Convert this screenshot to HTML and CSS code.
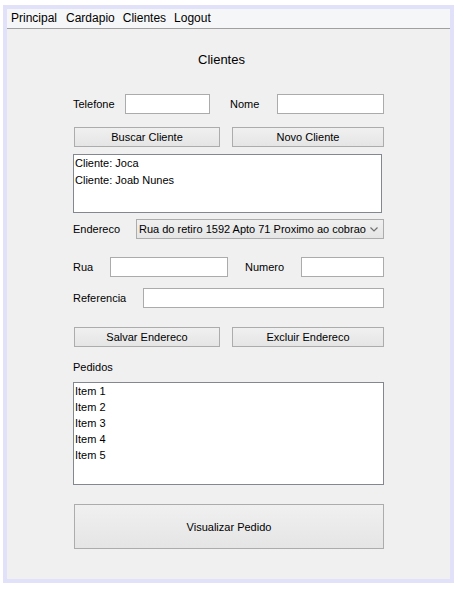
FILE: index.html
```html
<!DOCTYPE html>
<html>
<head>
<meta charset="utf-8">
<link rel="stylesheet" href="styles.css">
</head>
<body>
<div class="frame">
  <div class="window">
    <div class="menubar">
      <span class="menu-item menu-first">Principal</span>
      <span class="menu-item">Cardapio</span>
      <span class="menu-item">Clientes</span>
      <span class="menu-item">Logout</span>
    </div>
    <div class="content">
      <div class="title">Clientes</div>
      <div class="form">
        <div class="row row-search">
          <label class="lbl lbl-tel">Telefone</label>
          <div class="input in-tel"></div>
          <label class="lbl lbl-nome">Nome</label>
          <div class="input in-nome"></div>
        </div>
        <div class="row row-btns1">
          <button class="btn btn-left">Buscar Cliente</button>
          <button class="btn btn-right">Novo Cliente</button>
        </div>
        <div class="list list-clientes">
          <div class="item">Cliente: Joca</div>
          <div class="item">Cliente: Joab Nunes</div>
        </div>
        <div class="row row-end">
          <label class="lbl lbl-end">Endereco</label>
          <div class="combo">
            <span class="combo-text">Rua do retiro 1592 Apto 71 Proximo ao cobrao</span>
            <svg class="chev" width="8" height="5" viewBox="0 0 8 5"><path d="M0.5 0.5 L4 4 L7.5 0.5" fill="none" stroke="#707070" stroke-width="1.2"/></svg>
          </div>
        </div>
        <div class="row row-rua">
          <label class="lbl lbl-rua">Rua</label>
          <div class="input in-rua"></div>
          <label class="lbl lbl-num">Numero</label>
          <div class="input in-num"></div>
        </div>
        <div class="row row-ref">
          <label class="lbl lbl-ref">Referencia</label>
          <div class="input in-ref"></div>
        </div>
        <div class="row row-btns2">
          <button class="btn btn-left">Salvar Endereco</button>
          <button class="btn btn-right">Excluir Endereco</button>
        </div>
        <div class="lbl pedidos-lbl">Pedidos</div>
        <div class="list list-pedidos">
          <div class="item">Item 1</div>
          <div class="item">Item 2</div>
          <div class="item">Item 3</div>
          <div class="item">Item 4</div>
          <div class="item">Item 5</div>
        </div>
        <button class="btn btn-big">Visualizar Pedido</button>
      </div>
    </div>
  </div>
</div>
</body>
</html>
```
FILE: styles.css
```css
* { box-sizing: border-box; }
html, body { margin: 0; padding: 0; background: #ffffff; }
body { font-family: "Liberation Sans", Arial, sans-serif; font-size: 11px; color: #000; }

.frame {
  margin: 5px 0 0 3px;
  width: 451px;
  border: 4px solid #e1e1f9;
}
.window { width: 443px; height: 570px; display: flex; flex-direction: column; }

.menubar {
  height: 20px;
  background: #f5f6f7;
  border-bottom: 1px solid #a0a0a0;
  display: flex;
  align-items: center;
  padding-left: 4px;
  font-size: 12px;
  color: #000;
}
.menu-item { padding: 0 4px 1px 0; margin-right: 4px; }
.menu-first { margin-right: 5px; }

.content { flex: 1; background: #f0f0f0; }

.title {
  font-size: 13px;
  line-height: 16px;
  margin-top: 23px;
  padding-left: 191px;
}

.form { width: 311px; margin: 26px 0 0 66px; display: flex; flex-direction: column; }

.row { display: flex; align-items: center; }
.lbl { display: block; }

.input { height: 20px; background: #fff; border: 1px solid #ababab; }

.row-search { height: 20px; }
.lbl-tel { width: 52px; }
.in-tel { width: 85px; }
.lbl-nome { width: 47px; margin-left: 20px; }
.in-nome { flex: 1; }

.btn {
  font-family: inherit;
  font-size: 11px;
  color: #000;
  height: 20px;
  padding: 0;
  border: 1px solid #acacac;
  background: linear-gradient(#f0f0f0, #e5e5e5);
  border-radius: 0;
}
.row-btns1 { margin-top: 13px; }
.row-btns2 { margin-top: 19px; }
.btn-left { width: 146px; margin-left: 1px; }
.btn-right { width: 152px; margin-left: 12px; }

.list { background: #fff; border: 1px solid #828790; padding: 0 1px; }
.item { line-height: 16px; height: 16px; }
.list-clientes { margin-top: 7px; width: 309px; height: 59px; }
.list-clientes .item { height: 17px; line-height: 17px; }

.row-end { margin-top: 6px; }
.lbl-end { width: 63px; }
.combo {
  flex: 1;
  height: 20px;
  border: 1px solid #acacac;
  background: linear-gradient(#f0f0f0, #e5e5e5);
  display: flex;
  align-items: center;
  padding-left: 2px;
}
.combo-text { flex: 1; white-space: nowrap; }
.chev { margin-right: 5px; margin-top: 1px; }

.row-rua { margin-top: 18px; }
.lbl-rua { width: 37px; }
.in-rua { width: 118px; }
.lbl-num { width: 56px; margin-left: 17px; }
.in-num { flex: 1; }

.row-ref { margin-top: 11px; }
.lbl-ref { width: 70px; }
.in-ref { flex: 1; }

.pedidos-lbl { margin-top: 13px; line-height: 14px; height: 14px; }
.list-pedidos { margin-top: 8px; height: 103px; }

.btn-big { margin-top: 19px; margin-left: 1px; width: 310px; height: 45px; }
```
